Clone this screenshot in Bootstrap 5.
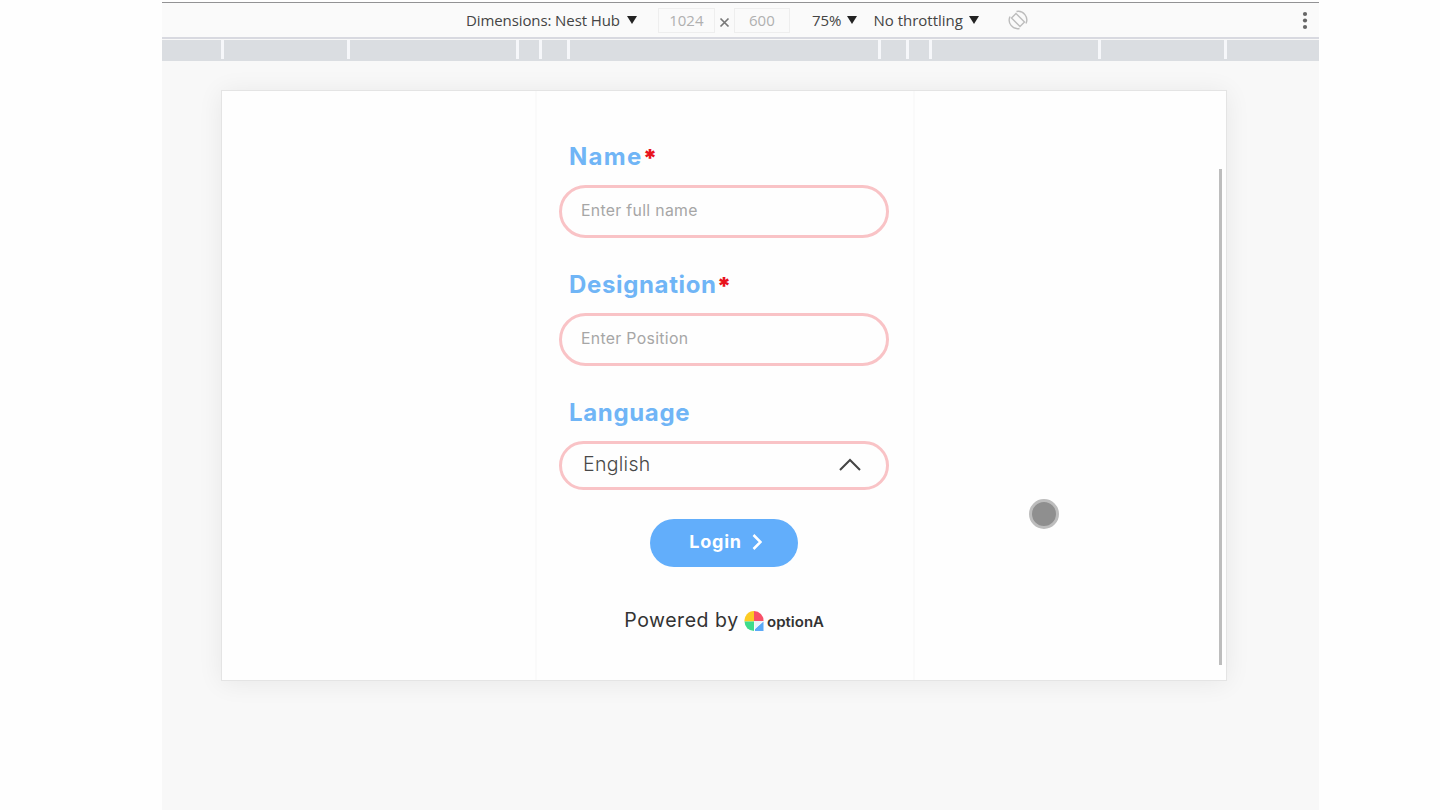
<!DOCTYPE html>
<html lang="en">
<head>
<meta charset="utf-8">
<meta name="viewport" content="width=device-width, initial-scale=1">
<title>Login</title>
<link href="https://cdn.jsdelivr.net/npm/bootstrap@5.3.0/dist/css/bootstrap.min.css" rel="stylesheet">
<script src="https://cdn.jsdelivr.net/npm/bootstrap@5.3.0/dist/js/bootstrap.bundle.min.js" defer></script>
<style>
body{background:#fefefe;font-family:Inter,"Open Sans",sans-serif;overflow:hidden}
.devtools{width:1157px;height:808px;margin:2px 0 0 162px;background:#f8f8f8;border-top:1px solid #929294}
.toolbar{height:36px;background:#fafafa;border-bottom:2px solid #d8d9e0;font:15px/20px "Open Sans",sans-serif;color:#444;padding-left:304px;white-space:nowrap}
.toolbar .tri{width:0;height:0;border:5px solid transparent;border-top:8px solid #222;border-bottom:0}
.dim{height:25px;border:1px solid #eee;color:#b0b0b0;text-align:center;line-height:23px}
.ruler{height:21px;margin-top:1px;background:#dadde1}
.ruler i{display:block;height:19px;border-right:3px solid #f6f7fa}
.screen{width:1006px;height:591px;margin:29px 0 0 59px;background:#fefefe;border:1px solid #e4e4e4;box-shadow:0 2px 24px rgba(0,0,0,.07)}
.pane{width:380px;height:589px;margin-left:313px;padding:51px 25px 0 22px;border:1px solid #fafafa;border-width:0 2px}
.field-label{font-size:24px;line-height:30px;font-weight:700;color:#70b5f6;padding-left:10px;margin-bottom:13px}
.field-label span{letter-spacing:.65px}
.field-label .wide{letter-spacing:1.3px}
.field-label b{display:inline-block;line-height:20px;transform:translateY(2px);color:#e8131c}
.field{width:330px;height:53px;border:3px solid #f9c3c6;border-radius:27px;padding:0 0 1px 19px;font-size:15.8px;letter-spacing:.32px;color:#a6a6a6;margin-bottom:32px}
.field.picker{height:49px;font-size:19.5px;letter-spacing:.3px;font-weight:300;color:#484848;padding:0 25px 1px 21px;margin-bottom:29px}
.login{width:148px;height:48px;border-radius:24px;background:#62aefb;color:#fff;font-weight:700;font-size:18px;letter-spacing:.8px;padding:0 0 3px 4px;gap:10px;border:0}
.powered{margin-top:38px;padding-left:2px;font-size:19.5px;letter-spacing:.55px;line-height:30px;color:#333;white-space:nowrap}
.thumb{width:3px;height:496px;background:#bdbdbd;margin:78px 4px 0 auto}
.pointer{position:absolute;left:1029px;top:499px;width:30px;height:30px;border-radius:50%;background:#8f8f8f;border:3px solid #bdbdbd}
</style>
</head>
<body>
<main class="devtools">
  <div class="toolbar d-flex align-items-center">
    <span style="letter-spacing:-.1px">Dimensions: Nest Hub</span><span class="tri" style="margin-left:7px"></span>
    <span class="dim" style="width:57px;margin-left:21px">1024</span>
    <svg width="19" height="20" viewBox="0 0 19 20" stroke="#777" stroke-width="1.7"><path d="M5.500 8.500l8 8M13.500 8.500l-8 8"/></svg>
    <span class="dim" style="width:56px">600</span>
    <span style="margin-left:22px">75%</span><span class="tri" style="margin-left:6px"></span>
    <span style="margin-left:16px">No throttling</span><span class="tri" style="margin-left:6px"></span>
    <svg style="margin-left:29px" width="20" height="20" viewBox="0 0 20 20" fill="none" stroke="#bcbcbc" stroke-width="1.4"><path d="M8 3.500L16.500 12 12 16.500 3.500 8zM2 6.500A8.600 8.600 0 0 0 11.500 18.500M18 13.500A8.600 8.600 0 0 0 8.500 1.500"/></svg>
    <svg class="ms-auto" style="margin-right:9px" width="10" height="20" fill="#666"><circle cx="5" cy="4" r="2.100"/><circle cx="5" cy="10.500" r="2.100"/><circle cx="5" cy="17" r="2.100"/></svg>
  </div>
  <div class="ruler d-flex">
    <i style="width:62px"></i><i style="width:126px"></i><i style="width:169px"></i><i style="width:23px"></i><i style="width:28px"></i><i style="width:311px"></i><i style="width:28px"></i><i style="width:23px"></i><i style="width:169px"></i><i style="width:126px"></i>
  </div>
  <section class="screen d-flex">
    <form class="pane flex-shrink-0">
      <div class="field-label"><span class="wide">Name</span><b>*</b></div>
      <div class="field d-flex align-items-center"><span>Enter full name</span></div>
      <div class="field-label"><span>Designation</span><b>*</b></div>
      <div class="field d-flex align-items-center"><span>Enter Position</span></div>
      <div class="field-label"><span>Language</span></div>
      <div class="field picker d-flex align-items-center justify-content-between"><span>English</span>
        <svg width="22" height="14" viewBox="0 0 22 14" fill="none" stroke="#444" stroke-width="2"><path d="M1 12L11 2l10 10"/></svg></div>
      <button type="button" class="login d-flex align-items-center justify-content-center mx-auto"><span>Login</span>
        <svg width="10" height="16" viewBox="0 0 10 16" fill="none" stroke="#fff" stroke-width="2.500"><path d="M1.500 1L8.500 8l-7 7"/></svg></button>
      <div class="powered d-flex align-items-center justify-content-center"><span>Powered by</span>
        <svg style="margin-left:5px" width="81" height="24" viewBox="0 0 81 24">
          <path d="M10 13.500H0.500A9.500 9.500 0 0 1 10 3z" fill="#fccb24"/><path d="M10 3a9.500 9.500 0 0 1 9.500 10H10z" fill="#f85068"/><path d="M.5 13.500H10V23A9.500 9.500 0 0 1 .5 13.500z" fill="#3ddc8c"/><path d="M11 23v-2l8.500-7.500V23z" fill="#5ba9f8"/><path d="M10 13h9L11 21z" fill="#e9f4fb"/>
          <text x="23" y="19" font-family="Inter" font-weight="600" font-size="14.500" letter-spacing="0" fill="#333" textLength="57" lengthAdjust="spacingAndGlyphs">optionA</text>
        </svg></div>
    </form>
    <div class="thumb"></div>
  </section>
</main>
<div class="pointer"></div>
</body>
</html>
